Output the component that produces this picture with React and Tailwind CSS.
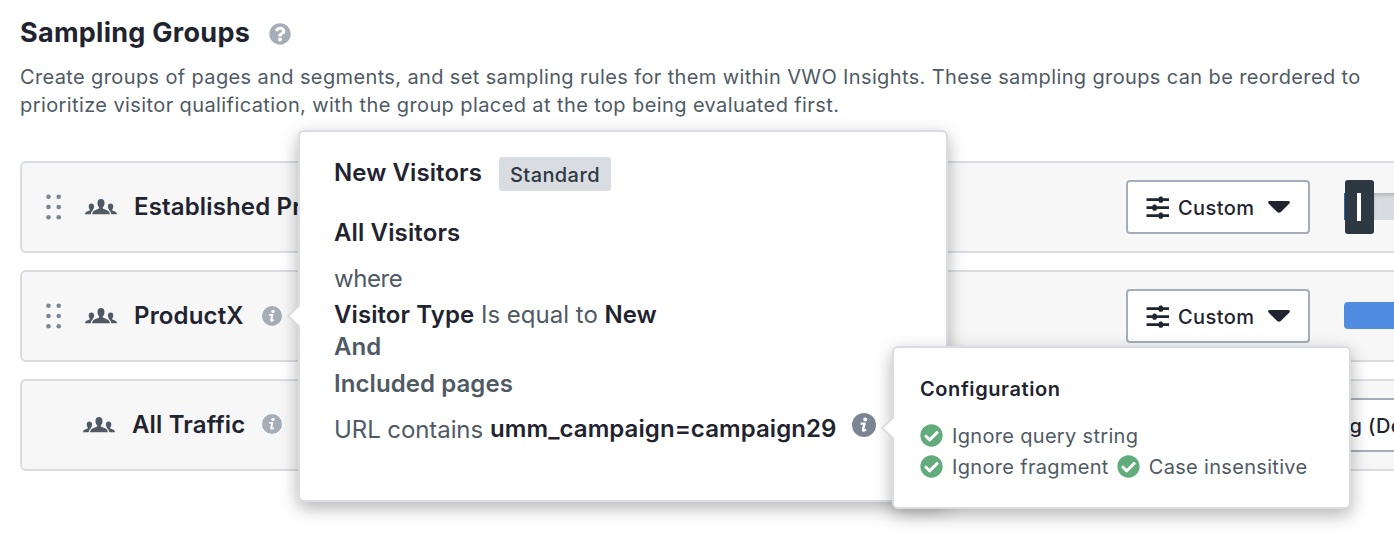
import { FaCheckCircle, FaQuestionCircle } from 'react-icons/fa'

// ==============================
// Data
// ==============================
const GROUPS = [
  { id: 'established', name: 'Established Product', draggable: true, info: false, mode: 'custom', rate: 'slider' },
  { id: 'productx', name: 'ProductX', draggable: true, info: true, mode: 'custom', rate: 'full' },
  { id: 'all', name: 'All Traffic', draggable: false, info: true, mode: 'default' },
]

// ==============================
// Icons
// ==============================
function InfoIcon({ className }) {
  return (
    <svg viewBox="0 0 24 24" className={className}>
      <circle cx="12" cy="12" r="12" fill="currentColor" />
      <circle cx="13.2" cy="6.5" r="2" fill="#fff" />
      <path
        d="M8.6 10.600h4l-1.600 6c-.2.900.3 1.200 1.200.9l1.900-.8"
        fill="none"
        stroke="#fff"
        strokeWidth="2.300"
        strokeLinejoin="round"
      />
    </svg>
  )
}

function PeopleIcon() {
  return (
    <svg viewBox="0 0 32 16" className="h-4 w-8 shrink-0 text-[#4f5a64]" fill="currentColor">
      <path d="M16 0c2.300 0 3.500 1.600 3.500 4 0 1.700-.6 3.300-1.600 4.200-.3 1 .1 1.500 1.100 1.900l3 1.100c1.900.7 2.700 1.900 2.900 4.100H7.100c.2-2.200 1-3.400 2.900-4.100l3-1.100c1-.4 1.400-.9 1.100-1.900-1-.9-1.600-2.500-1.600-4.200 0-2.400 1.200-4 3.500-4z" />
      <path d="M6.400 4.500c1.800 0 2.700 1.200 2.700 3 0 1.200-.4 2.200-1.100 2.900-.1.300 0 .5.300.7-1.500.9-2.300 2.200-2.600 4.200H0c.2-1.500.8-2.300 2-2.800l2-.8c.8-.3 1-.7.8-1.300-.7-.7-1.100-1.700-1.100-2.900 0-1.800.9-3 2.700-3z" />
      <path d="M25.600 4.500c-1.800 0-2.700 1.200-2.700 3 0 1.200.4 2.200 1.100 2.900.1.300 0 .5-.3.700 1.500.9 2.300 2.200 2.600 4.200H32c-.2-1.500-.8-2.300-2-2.800l-2-.8c-.8-.3-1-.7-.8-1.300.7-.7 1.100-1.700 1.100-2.900 0-1.800-.9-3-2.700-3z" />
    </svg>
  )
}

function GripIcon() {
  return (
    <svg viewBox="0 0 16 26" className="h-[26px] w-4 shrink-0 text-[#7c8593]" fill="currentColor">
      {[2.5, 12.7].map((x) => [2.8, 13, 23.2].map((y) => <circle key={`${x}-${y}`} cx={x} cy={y} r="2.3" />))}
    </svg>
  )
}

function SlidersIcon() {
  return (
    <svg viewBox="0 0 23 23" className="h-[23px] w-[23px] shrink-0" fill="currentColor">
      <path d="M.5 2.200h22.500v2.800H.5zM.5 10.200h22.500v2.800H.5zM.5 18.200h22.500v2.800H.5z" />
      <rect x="12.700" y="0.400" width="4.200" height="6.400" rx="1.600" />
      <rect x="6.500" y="8.400" width="4.200" height="6.400" rx="1.600" />
      <rect x="12.700" y="16.400" width="4.200" height="6.400" rx="1.600" />
    </svg>
  )
}

function CaretIcon() {
  return (
    <svg viewBox="0 0 22 12" className="h-3 w-[22px] shrink-0" fill="currentColor">
      <path d="M1.600 0h18.800c1.400 0 2 1.600 1 2.600l-8.600 8.300c-1 1-2.600 1-3.600 0L.6 2.600C-.4 1.600.2 0 1.600 0z" />
    </svg>
  )
}

// ==============================
// Components
// ==============================
function PopoverArrow({ className }) {
  return (
    <svg viewBox="0 0 14 24" className={className}>
      <path d="M14 1L2 12l12 11" fill="#fff" stroke="#d9dde2" strokeWidth="2" />
    </svg>
  )
}

function ModeSelect() {
  return (
    <button className="flex h-[54px] w-[184px] shrink-0 items-center rounded-[4px] border-2 border-[#a6adb9] bg-white pl-[18px] text-[#1f2430]">
      <SlidersIcon />
      <span className="ml-[9px] w-[90px] pt-0.5 text-left text-[20px] font-medium tracking-[0.4px]">Custom</span>
      <CaretIcon />
    </button>
  )
}

function RateSlider() {
  return (
    <div className="flex h-[54px] w-[200px] items-center">
      <div className="mb-px h-[27px] w-px bg-[#2467b3]" />
      <div className="flex h-[54px] w-[29px] items-center justify-center rounded-[3px] bg-[#2e3842]">
        <div className="mr-px h-7 w-1 bg-white" />
      </div>
      <div className="mb-px h-[27px] flex-1 bg-[#d8dce1] shadow-[inset_0_3px_4px_-1px_rgba(0,0,0,0.2)]" />
    </div>
  )
}

function GroupRow({ group }) {
  return (
    <div className="flex h-[92px] w-[1600px] items-center rounded-md border-2 border-[#d9dde2] bg-[#f7f7f7]">
      <div className="flex w-[1104px] shrink-0 items-center">
        <div className={group.draggable ? 'flex w-[63px] pl-6' : 'w-[61px]'}>{group.draggable && <GripIcon />}</div>
        <PeopleIcon />
        <span className="ml-[17px] text-[24px] leading-8 font-semibold tracking-[0.15px] whitespace-nowrap text-[#1f2430]">
          {group.name}
        </span>
        {group.info && (
          <InfoIcon
            className={clsxInfo(group.draggable)}
          />
        )}
      </div>
      {group.mode === 'custom' && <ModeSelect />}
      {group.mode === 'default' && (
        <button className="flex h-[54px] w-[420px] items-center rounded-[4px] border-2 border-[#a6adb9] bg-white pt-0.5 pl-[73px] text-[20px] font-medium tracking-[0.4px] whitespace-nowrap text-[#1f2430]">
          Global Sampling (Default)
        </button>
      )}
      <div className="ml-[34px]">
        {group.rate === 'slider' && <RateSlider />}
        {group.rate === 'full' && <div className="mb-px h-[27px] w-[200px] rounded-[4px] bg-[#508de0]" />}
      </div>
    </div>
  )
}

function clsxInfo(draggable) {
  return draggable
    ? 'ml-[18px] h-5 w-5 shrink-0 text-[#a6adb9]'
    : 'mb-0.5 ml-[17px] h-5 w-5 shrink-0 text-[#a6adb9]'
}

function Check({ children }) {
  return (
    <span className="flex items-center gap-[9px]">
      <FaCheckCircle className="h-[23px] w-[23px] text-[#62ac7c]" />
      {children}
    </span>
  )
}

function SegmentPopover() {
  return (
    <div className="absolute top-[130px] left-[298px] h-[372px] w-[650px] rounded-md border-2 border-[#d9dde2] bg-white px-[34px] pt-[25px] text-[24px] leading-8 whitespace-nowrap text-[#4f5a64] shadow-[0_6px_18px_rgba(0,0,0,0.3)]">
      <PopoverArrow className="absolute top-[172px] -left-[14px] h-6 w-3.5" />
      <div className="flex items-center">
        <h2 className="mb-0.5 font-semibold tracking-[0.08px] text-[#1f2430]">New Visitors</h2>
        <span className="ml-[17px] flex h-[34px] w-[112px] items-center justify-center rounded-[3px] bg-[#d9dde2] pt-0.5 text-[20px] font-medium tracking-[0.4px] text-[#2e3842]">
          Standard
        </span>
      </div>
      <h3 className="mt-[26px] font-semibold tracking-[0.13px] text-[#1f2430]">All Visitors</h3>
      <p className="mt-[14px] tracking-[-0.4px]">where</p>
      <p className="mt-1">
        <strong className="font-semibold tracking-[0.08px] text-[#1f2430]">Visitor Type</strong> Is equal to{' '}
        <strong className="font-semibold text-[#1f2430]">New</strong>
      </p>
      <p className="font-semibold">And</p>
      <p className="mt-[5px] font-semibold tracking-[0.08px]">Included pages</p>
      <div className="mt-3 flex items-center">
        <p className="pt-0.5 tracking-[-0.08px]">URL contains</p>
        <strong className="ml-[7px] font-semibold tracking-[0.07px] text-[#1f2430]">umm_campaign=campaign29</strong>
        <InfoIcon className="mb-[9px] ml-4 h-6 w-6 shrink-0 text-[#7c8593]" />
      </div>
    </div>
  )
}

function ConfigurationPopover() {
  return (
    <div className="absolute top-[346px] left-[892px] h-[163px] w-[459px] rounded-md border-2 border-[#d9dde2] bg-white pt-[26px] pl-[26px] text-[20px] leading-[30px] tracking-[0.32px] whitespace-nowrap text-[#4f5a64] shadow-[0_6px_18px_rgba(0,0,0,0.3)]">
      <PopoverArrow className="absolute top-[68px] -left-[14px] h-6 w-3.5" />
      <h3 className="font-semibold tracking-[0.58px] text-[#1f2430]">Configuration</h3>
      <div className="mt-4 flex h-[31px] items-center">
        <Check>Ignore query string</Check>
      </div>
      <div className="flex h-[31px] items-center gap-2">
        <Check>Ignore fragment</Check>
        <Check>Case insensitive</Check>
      </div>
    </div>
  )
}

export default function App() {
  return (
    <main className="relative h-[534px] w-[1394px] overflow-hidden bg-white pl-5 font-['Inter',sans-serif]">
      <div className="flex items-center pt-[17px]">
        <h1 className="text-[27px] leading-8 font-bold tracking-[0.27px] text-[#1f2430]">Sampling Groups</h1>
        <FaQuestionCircle className="mt-0.5 ml-[19px] h-[22px] w-[22px] text-[#a6adb9]" />
      </div>
      <p className="mt-[14px] text-[20px] leading-7 tracking-[0.37px] whitespace-nowrap text-[#4f5a64]">
        Create groups of pages and segments, and set sampling rules for them within VWO Insights. These sampling groups can be reordered to
        <br />
        <span className="tracking-[0.4px]">
          prioritize visitor qualification, with the group placed at the top being evaluated first.
        </span>
      </p>

      <div className="mt-[42px] flex flex-col gap-[17px]">
        {GROUPS.map((group) => (
          <GroupRow key={group.id} group={group} />
        ))}
      </div>

      <SegmentPopover />
      <ConfigurationPopover />
    </main>
  )
}
